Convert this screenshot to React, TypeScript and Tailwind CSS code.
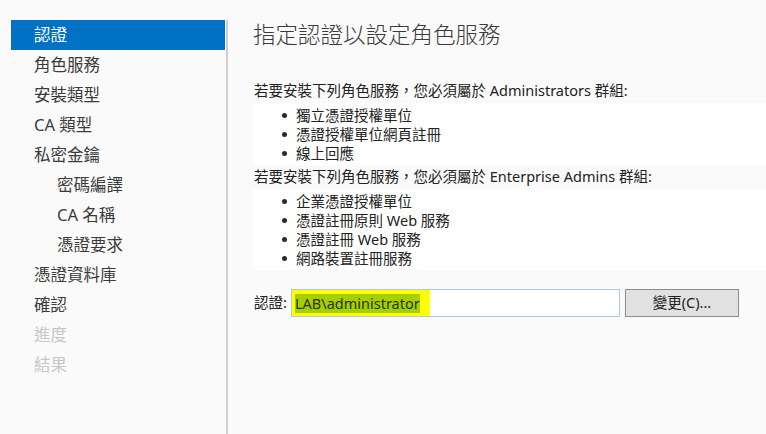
import React from "react";

const font = { fontFamily: '"Noto Sans", "Noto Sans CJK TC", sans-serif' };

type NavItem = { label: string; indent?: boolean; active?: boolean; disabled?: boolean };

const nav: NavItem[] = [
  { label: "認證", active: true },
  { label: "角色服務" },
  { label: "安裝類型" },
  { label: "CA 類型" },
  { label: "私密金鑰" },
  { label: "密碼編譯", indent: true },
  { label: "CA 名稱", indent: true },
  { label: "憑證要求", indent: true },
  { label: "憑證資料庫" },
  { label: "確認" },
  { label: "進度", disabled: true },
  { label: "結果", disabled: true },
];

const group1 = ["獨立憑證授權單位", "憑證授權單位網頁註冊", "線上回應"];
const group2 = ["企業憑證授權單位", "憑證註冊原則 Web 服務", "憑證註冊 Web 服務", "網路裝置註冊服務"];

function BulletList({ items }: { items: string[] }) {
  return (
    <div className="bg-white pt-[3px] pb-[2px]">
      {items.map((t) => (
        <div key={t} className="flex items-center h-[19px] pl-[29px]">
          <span className="w-[14px] flex items-center">
            <span className="block w-[5px] h-[5px] rounded-full bg-[#2a2a2a]" />
          </span>
          <span className="text-[14.5px] leading-[19px] text-[#222]">{t}</span>
        </div>
      ))}
    </div>
  );
}

export default function App() {
  return (
    <div className="w-[766px] h-[434px] bg-[#fafafa] flex overflow-hidden" style={font}>
      <div className="w-[225px] shrink-0 pt-[20px] pl-[11px]">
        {nav.map((n) => (
          <div
            key={n.label}
            className={
              "h-[30px] flex items-center text-[16.5px] " +
              (n.active ? "bg-[#0072c6] text-white " : n.disabled ? "text-[#c6c6c6] " : "text-[#3a3a3a] ")
            }
          >
            <span className={n.indent ? "pl-[46px]" : "pl-[23px]"}>{n.label}</span>
          </div>
        ))}
      </div>
      <div className="flex flex-col pt-[20px] pl-[1px]">
        <div className="w-[2px] flex-1 bg-[#cfcfcf]" />
      </div>
      <div className="flex-1 pl-[25px] pt-[19px] flex flex-col">
        <div className="text-[22.5px] leading-[32px] text-[#3a3a3a] font-light">指定認證以設定角色服務</div>
        <div className="mt-[27px]">
          <div className="h-[25px] flex items-center text-[14.5px] text-[#222] pl-[1px]">
            若要安裝下列角色服務，您必須屬於 Administrators 群組:
          </div>
          <BulletList items={group1} />
          <div className="h-[24px] flex items-center text-[14.5px] text-[#222] pl-[1px]">
            若要安裝下列角色服務，您必須屬於 Enterprise Admins 群組:
          </div>
          <BulletList items={group2} />
        </div>
        <div className="mt-[19px] flex items-center">
          <span className="text-[14.5px] text-[#222] w-[38px] pl-[1px]">認證:</span>
          <div className="w-[329px] h-[28px] border border-[#a8c8e8] bg-white flex items-stretch">
            <div className="w-[138px] bg-[#ffff00] flex items-center pl-[3px]">
              <span className="bg-[#a5d000] text-[14.5px] leading-[19px] text-[#2b3300]">LAB\administrator</span>
            </div>
          </div>
          <button className="ml-[5px] w-[114px] h-[28px] bg-[#e1e1e1] border border-[#8c8c8c] text-[14.5px] text-[#222] flex items-center justify-center">
            變更(C)...
          </button>
        </div>
      </div>
    </div>
  );
}
